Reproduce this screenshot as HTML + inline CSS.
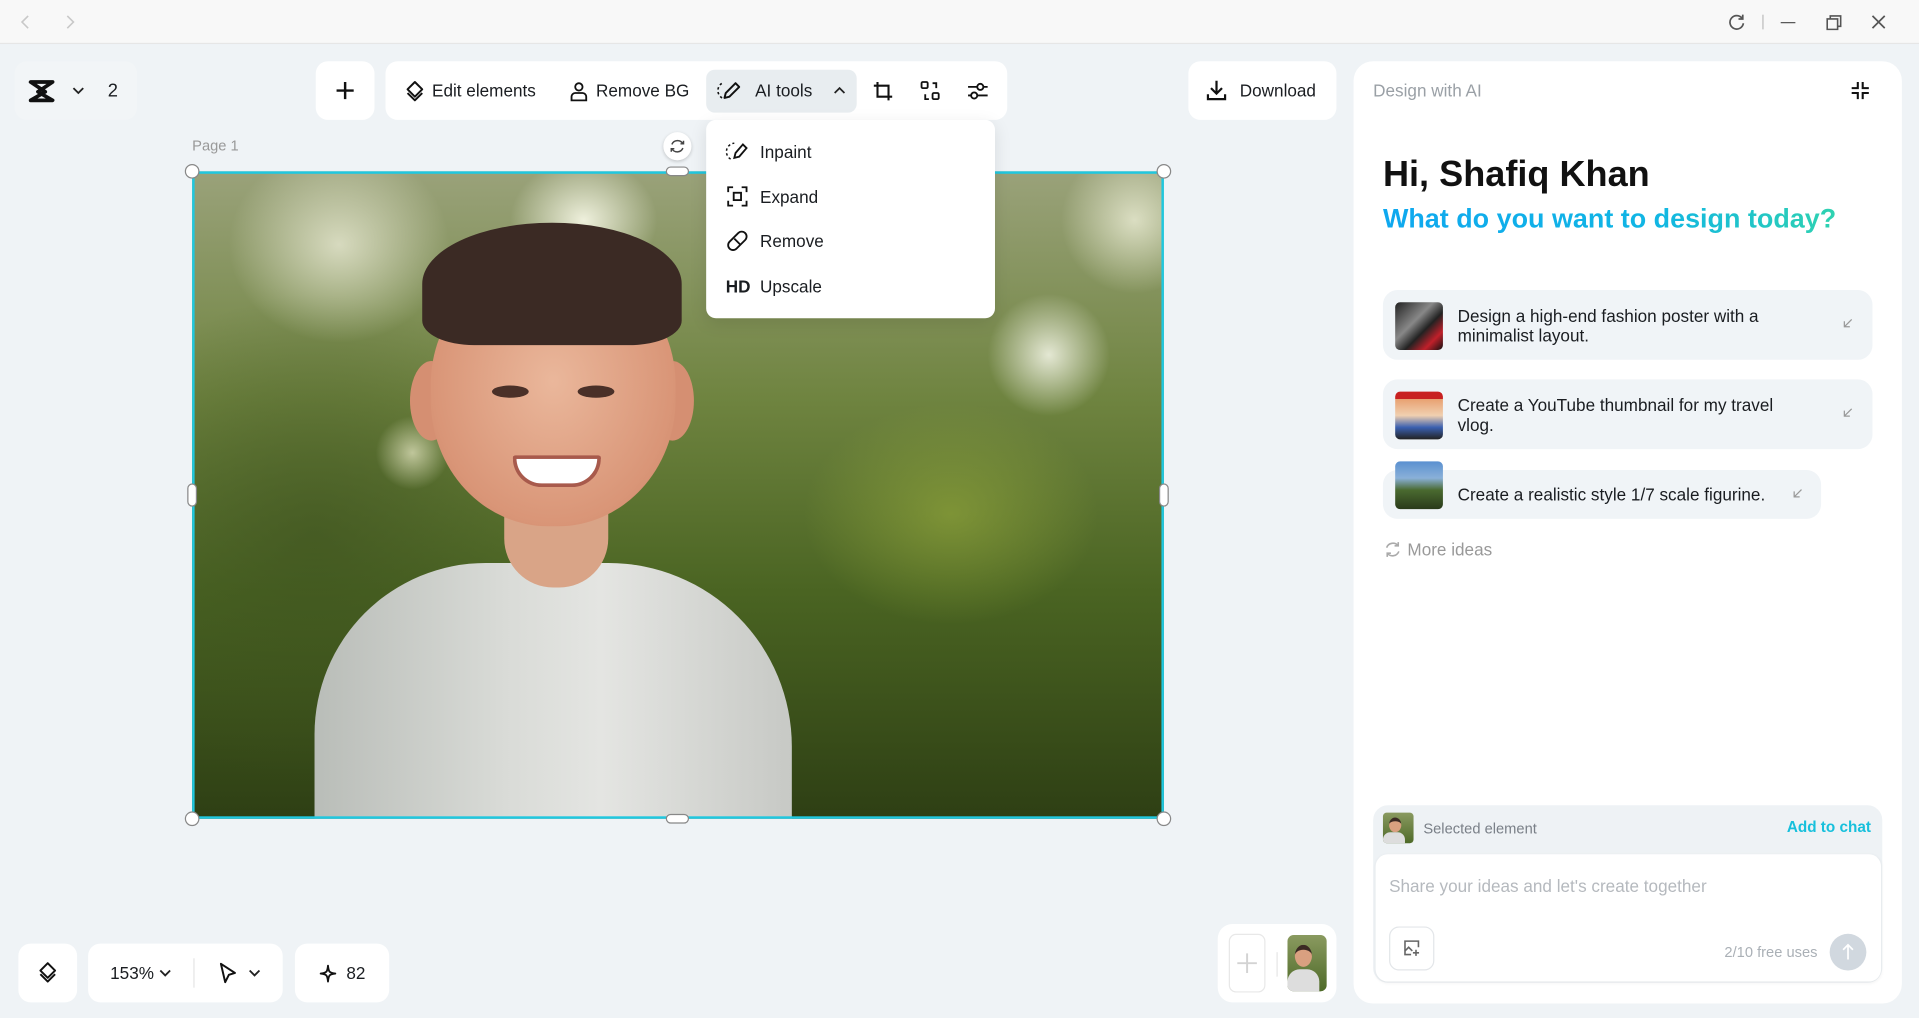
<!DOCTYPE html>
<html><head><meta charset="utf-8"><style>
*{box-sizing:border-box;margin:0;padding:0}
html,body{width:1919px;height:1018px;overflow:hidden;background:#eff3f6;font-family:"Liberation Sans",sans-serif;color:#1a1d21}
#w{position:absolute;left:0;top:0;width:1568px;height:832px;transform:scale(1.22385);transform-origin:0 0;background:#eff3f6}
.a{position:absolute}
.wb{position:absolute;background:#fff;border-radius:10px}
.t{position:absolute;font-size:14px;white-space:nowrap;line-height:1}
svg{position:absolute;overflow:visible}
.card{position:absolute;background:#f0f4f7;border-radius:12px}
.th{position:absolute;border-radius:4px;overflow:hidden}
.h{position:absolute;width:12px;height:12px;border-radius:50%;background:#fff;border:1.3px solid #888}
</style></head><body><div id="w">
<div class="a" style="left:0;top:0;width:1568px;height:36px;background:#f8f8f8;border-bottom:1px solid #e6e6e6"></div>
<svg style="left:16px;top:12px" width="10" height="12"><path d="M7 1L2 6l5 5" fill="none" stroke="#c8c8c8" stroke-width="1.3"/></svg>
<svg style="left:52px;top:12px" width="10" height="12"><path d="M3 1l5 5-5 5" fill="none" stroke="#c8c8c8" stroke-width="1.3"/></svg>
<svg style="left:1412px;top:11px" width="14" height="14"><path d="M11.5 4A5.5 5.5 0 1 0 12.5 8M12 1v3.5H8.5" fill="none" stroke="#555" stroke-width="1.4"/></svg>
<div class="a" style="left:1440px;top:12px;width:1px;height:12px;background:#bbb"></div>
<div class="a" style="left:1455px;top:18px;width:12px;height:1.4px;background:#555"></div>
<svg style="left:1492px;top:12px" width="13" height="13"><path d="M1 3.5h8.5V12H1z M3.5 3.5V1H12v8.5H9.5" fill="none" stroke="#555" stroke-width="1.3"/></svg>
<svg style="left:1529px;top:12px" width="12" height="12"><path d="M1 1l10 10M11 1L1 11" stroke="#555" stroke-width="1.4"/></svg>

<div class="a" style="left:12px;top:50px;width:100px;height:48px;background:#f2f5f7;border-radius:10px"></div>
<svg style="left:23px;top:66px" width="22" height="17"><path d="M2 1h18L8 9l12 7H2l12-7z" fill="none" stroke="#111" stroke-width="3" stroke-linejoin="round"/></svg>
<svg style="left:59px;top:71px" width="10" height="6"><path d="M1 1l4 4 4-4" fill="none" stroke="#222" stroke-width="1.5"/></svg>
<div class="t" style="left:88px;top:67px;font-size:15px">2</div>

<div class="wb" style="left:258px;top:50px;width:48px;height:48px"></div>
<svg style="left:274px;top:66px" width="16" height="16"><path d="M8 1v14M1 8h14" stroke="#111" stroke-width="2"/></svg>

<div class="wb" style="left:315px;top:50px;width:508px;height:48px"></div>
<svg style="left:331px;top:66px" width="16" height="17"><path d="M8 1l6 6-6 6-6-6z M2 10l6 6 6-6" fill="none" stroke="#111" stroke-width="1.6" stroke-linejoin="round"/></svg>
<div class="t" style="left:353px;top:67px">Edit elements</div>
<svg style="left:465px;top:66px" width="16" height="17"><circle cx="8" cy="5" r="3" fill="none" stroke="#111" stroke-width="1.5"/><path d="M2 16v-3a3 3 0 0 1 3-3h6a3 3 0 0 1 3 3v3z" fill="none" stroke="#111" stroke-width="1.5"/></svg>
<div class="t" style="left:487px;top:67px">Remove BG</div>
<div class="a" style="left:577px;top:57px;width:123px;height:35px;background:#e8edf0;border-radius:7px"></div>
<svg style="left:587px;top:66px" width="18" height="17"><path d="M3 14a7 7 0 0 1 0-12" fill="none" stroke="#111" stroke-width="1.3" stroke-dasharray="2 2"/><path d="M14 2l3 3-8 8-4 1 1-4z" fill="none" stroke="#111" stroke-width="1.6" stroke-linejoin="round"/></svg>
<div class="t" style="left:617px;top:67px">AI tools</div>
<svg style="left:681px;top:71px" width="10" height="6"><path d="M1 5l4-4 4 4" fill="none" stroke="#222" stroke-width="1.4"/></svg>
<svg style="left:713px;top:66px" width="17" height="17"><path d="M4 1v12h12M1 4h12v12" fill="none" stroke="#111" stroke-width="1.7"/></svg>
<svg style="left:752px;top:66px" width="17" height="17"><rect x="1" y="1" width="5" height="5" rx="1" fill="none" stroke="#111" stroke-width="1.5"/><rect x="10" y="10" width="5" height="5" rx="1" fill="none" stroke="#111" stroke-width="1.5"/><path d="M10 2h3v4M7 15H4v-4" fill="none" stroke="#111" stroke-width="1.5"/></svg>
<svg style="left:790px;top:66px" width="18" height="17"><path d="M1 5h16M1 12h16" stroke="#111" stroke-width="1.5"/><circle cx="11" cy="5" r="2.5" fill="#fff" stroke="#111" stroke-width="1.5"/><circle cx="6" cy="12" r="2.5" fill="#fff" stroke="#111" stroke-width="1.5"/></svg>

<div class="wb" style="left:971px;top:50px;width:121px;height:48px"></div>
<svg style="left:986px;top:65px" width="16" height="18"><path d="M8 1v10M3.5 7L8 11.5 12.5 7M1 12v4h14v-4" fill="none" stroke="#111" stroke-width="1.8"/></svg>
<div class="t" style="left:1013px;top:67px">Download</div>

<div class="a" style="left:157px;top:140px;width:794px;height:529px;overflow:hidden;background:
radial-gradient(ellipse 60px 50px at 320px 40px,rgba(255,255,240,.85),transparent),
radial-gradient(ellipse 90px 80px at 120px 60px,rgba(240,240,220,.75),transparent),
radial-gradient(ellipse 50px 50px at 700px 150px,rgba(255,255,245,.8),transparent),
radial-gradient(ellipse 40px 40px at 580px 80px,rgba(240,240,200,.7),transparent),
radial-gradient(ellipse 60px 60px at 770px 40px,rgba(250,250,230,.7),transparent),
radial-gradient(ellipse 30px 30px at 180px 230px,rgba(235,235,200,.7),transparent),
radial-gradient(ellipse 120px 90px at 620px 280px,rgba(150,170,60,.6),transparent),
radial-gradient(ellipse 200px 200px at 100px 300px,rgba(60,80,30,.6),transparent),
linear-gradient(180deg,#9aa27a 0%,#6f8440 35%,#4a6422 65%,#2e3f14 100%)">
 <div class="a" style="left:100px;top:320px;width:390px;height:260px;background:linear-gradient(90deg,#b9bdb8,#d9dbd7 40%,#e4e5e2 60%,#c7c9c5);border-radius:140px 150px 0 0"></div>
 <div class="a" style="left:255px;top:260px;width:85px;height:80px;background:#d9a487;border-radius:0 0 40px 40px"></div>
 <div class="a" style="left:178px;top:155px;width:35px;height:65px;background:#d58f72;border-radius:50%"></div>
 <div class="a" style="left:375px;top:155px;width:35px;height:65px;background:#d58f72;border-radius:50%"></div>
 <div class="a" style="left:195px;top:75px;width:200px;height:215px;background:radial-gradient(ellipse at 50% 45%,#eab79b,#d99577 70%,#c47d62);border-radius:46% 46% 48% 48%"></div>
 <div class="a" style="left:188px;top:42px;width:212px;height:100px;background:#3b2a24;border-radius:50% 50% 20% 20%"></div>
 <div class="a" style="left:245px;top:175px;width:30px;height:10px;background:#4a3028;border-radius:50%"></div>
 <div class="a" style="left:315px;top:175px;width:30px;height:10px;background:#4a3028;border-radius:50%"></div>
 <div class="a" style="left:262px;top:232px;width:72px;height:26px;background:#fff;border:3px solid #a85a4c;border-radius:4px 4px 40px 40px"></div>
</div>
<div class="a" style="left:157px;top:140px;width:794px;height:529px;border:2px solid #1fc8e0"></div>
<div class="h" style="left:151px;top:134px"></div><div class="h" style="left:945px;top:134px"></div>
<div class="h" style="left:151px;top:663px"></div><div class="h" style="left:945px;top:663px"></div>
<div class="a" style="left:544px;top:136px;width:19px;height:8px;border-radius:4px;background:#fff;border:1.3px solid #888"></div>
<div class="a" style="left:544px;top:665px;width:19px;height:8px;border-radius:4px;background:#fff;border:1.3px solid #888"></div>
<div class="a" style="left:153px;top:395px;width:8px;height:19px;border-radius:4px;background:#fff;border:1.3px solid #888"></div>
<div class="a" style="left:947px;top:395px;width:8px;height:19px;border-radius:4px;background:#fff;border:1.3px solid #888"></div>
<div class="a" style="left:542px;top:108px;width:23px;height:23px;border-radius:50%;background:#fff;box-shadow:0 1px 3px rgba(0,0,0,.2)"></div>
<svg style="left:547px;top:113px" width="13" height="13"><path d="M11 4.5A5 5 0 0 0 2 5M2 8.5A5 5 0 0 0 11 8M9 4.5h2.5V2M4 8.5H1.5V11" fill="none" stroke="#444" stroke-width="1.2"/></svg>
<div class="t" style="left:157px;top:113px;font-size:12px;color:#999">Page 1</div>

<div class="a" style="left:577px;top:98px;width:236px;height:162px;background:#fff;border-radius:8px;box-shadow:0 4px 14px rgba(0,0,0,.1)"></div>
<svg style="left:594px;top:115px" width="18" height="18"><path d="M3 15a7 7 0 0 1 3-13" fill="none" stroke="#111" stroke-width="1.2" stroke-dasharray="2 2"/><path d="M13 3l3 3-6 7-4 1 1-4z" fill="none" stroke="#111" stroke-width="1.5"/></svg>
<div class="t" style="left:621px;top:117px">Inpaint</div>
<svg style="left:594px;top:152px" width="17" height="17"><path d="M1 5V1h4M12 1h4v4M16 12v4h-4M5 16H1v-4" fill="none" stroke="#111" stroke-width="1.5"/><rect x="5.5" y="5.5" width="6" height="6" fill="none" stroke="#111" stroke-width="1.5"/></svg>
<div class="t" style="left:621px;top:154px">Expand</div>
<svg style="left:594px;top:189px" width="17" height="17"><rect x="4" y="-1" width="8" height="18" rx="4" transform="rotate(45 8.5 8.5)" fill="none" stroke="#111" stroke-width="1.5"/><path d="M6 6l5 5" stroke="#111" stroke-width="1.5"/></svg>
<div class="t" style="left:621px;top:190px">Remove</div>
<div class="t" style="left:593px;top:227px;font-weight:bold;font-size:14px">HD</div>
<div class="t" style="left:621px;top:227px">Upscale</div>

<div class="wb" style="left:15px;top:771px;width:48px;height:48px"></div>
<svg style="left:31px;top:786px" width="16" height="17"><path d="M8 1l6 6-6 6-6-6z M2 10l6 6 6-6" fill="none" stroke="#111" stroke-width="1.6" stroke-linejoin="round"/></svg>
<div class="wb" style="left:72px;top:771px;width:159px;height:48px"></div>
<div class="t" style="left:90px;top:788px">153%</div>
<svg style="left:130px;top:792px" width="10" height="6"><path d="M1 1l4 4 4-4" fill="none" stroke="#222" stroke-width="1.5"/></svg>
<div class="a" style="left:158px;top:783px;width:1px;height:24px;background:#e5e5e5"></div>
<svg style="left:179px;top:786px" width="15" height="18"><path d="M1.5 1.5L13 9l-5 1.5-3 6z" fill="none" stroke="#111" stroke-width="1.6" stroke-linejoin="round"/></svg>
<svg style="left:203px;top:792px" width="10" height="6"><path d="M1 1l4 4 4-4" fill="none" stroke="#222" stroke-width="1.5"/></svg>
<div class="wb" style="left:241px;top:771px;width:77px;height:48px"></div>
<svg style="left:261px;top:788px" width="14" height="15"><path d="M7 1C7.5 6 8 7 13 7.5 8 8 7.5 9 7 14 6.5 9 6 8 1 7.5 6 7 6.5 6 7 1z" fill="none" stroke="#111" stroke-width="1.5" stroke-linejoin="round"/></svg>
<div class="t" style="left:283px;top:788px">82</div>

<div class="wb" style="left:995px;top:755px;width:97px;height:64px;border-radius:12px"></div>
<div class="a" style="left:1004px;top:763px;width:30px;height:48px;border:1px solid #e8e8e8;border-radius:6px"></div>
<svg style="left:1010px;top:778px" width="18" height="18"><path d="M9 1v16M1 9h16" stroke="#d3d3d3" stroke-width="1.6"/></svg>
<div class="a" style="left:1043px;top:778px;width:1px;height:20px;background:#e5e5e5"></div>
<div class="a" style="left:1052px;top:764px;width:32px;height:46px;border-radius:5px;background:linear-gradient(180deg,#8a9a60,#4e6a28);overflow:hidden"><div class="a" style="left:6px;top:8px;width:14px;height:18px;background:#d9a080;border-radius:50%;border-top:4px solid #3b2a24"></div><div class="a" style="left:0;top:28px;width:26px;height:20px;background:#ddd;border-radius:10px 10px 0 0"></div></div>

<div class="a" style="left:1106px;top:50px;width:448px;height:770px;background:#fff;border-radius:16px"></div>
<div class="t" style="left:1122px;top:67px;color:#9aa0a6">Design with AI</div>
<svg style="left:1512px;top:66px" width="16" height="16"><path d="M6 1v5H1M10 1v5h5M6 15v-5H1M10 15v-5h5" fill="none" stroke="#111" stroke-width="1.7"/></svg>
<div class="t" style="left:1130px;top:128px;font-size:29.5px;font-weight:bold;color:#111">Hi, Shafiq Khan</div>
<div class="t" style="left:1130px;top:168px;font-size:22px;font-weight:bold;background:linear-gradient(90deg,#0fa8ef,#11b6e4 60%,#2fd2b0);-webkit-background-clip:text;background-clip:text;color:transparent;padding-bottom:4px">What do you want to design today?</div>

<div class="card" style="left:1130px;top:237px;width:400px;height:57px"></div>
<div class="th" style="left:1140px;top:247px;width:39px;height:39px;background:linear-gradient(135deg,#222,#888 40%,#222 60%,#c0202a 80%,#111)"></div>
<div class="t" style="left:1191px;top:250px;line-height:16px;white-space:normal;width:290px">Design a high-end fashion poster with a minimalist layout.</div>
<svg style="left:1506px;top:260px" width="8" height="8"><path d="M7 1L1 7M1 2.5V7h4.5" fill="none" stroke="#999" stroke-width="1"/></svg>

<div class="card" style="left:1130px;top:310px;width:400px;height:57px"></div>
<div class="th" style="left:1140px;top:320px;width:39px;height:39px;background:linear-gradient(180deg,#c82020 0 15%,#e8a070 15%,#f0d0b0 50%,#3a60b0 75%,#222)"></div>
<div class="t" style="left:1191px;top:323px;line-height:16px;white-space:normal;width:285px">Create a YouTube thumbnail for my travel vlog.</div>
<svg style="left:1506px;top:333px" width="8" height="8"><path d="M7 1L1 7M1 2.5V7h4.5" fill="none" stroke="#999" stroke-width="1"/></svg>

<div class="card" style="left:1130px;top:384px;width:358px;height:40px"></div>
<div class="th" style="left:1140px;top:377px;width:39px;height:39px;background:linear-gradient(180deg,#5a90d0,#8ab0d8 35%,#4a6a30 60%,#2a3a1a)"></div>
<div class="t" style="left:1191px;top:397px">Create a realistic style 1/7 scale figurine.</div>
<svg style="left:1465px;top:399px" width="8" height="8"><path d="M7 1L1 7M1 2.5V7h4.5" fill="none" stroke="#999" stroke-width="1"/></svg>

<svg style="left:1131px;top:442px" width="14" height="14"><path d="M11.5 4A5.5 5.5 0 0 0 2 5.5M2.5 10A5.5 5.5 0 0 0 12 8.5M11.5 1v3H8.5M2.5 13v-3h3" fill="none" stroke="#aaa" stroke-width="1.3"/></svg>
<div class="t" style="left:1150px;top:442px;color:#999">More ideas</div>

<div class="a" style="left:1122px;top:658px;width:416px;height:145px;background:#eef2f5;border-radius:12px"></div>
<div class="a" style="left:1130px;top:664px;width:25px;height:25px;border-radius:3px;background:linear-gradient(180deg,#8a9a60,#4e6a28);overflow:hidden"><div class="a" style="left:5px;top:4px;width:10px;height:12px;background:#d9a080;border-radius:50%;border-top:3px solid #3b2a24"></div><div class="a" style="left:0;top:16px;width:18px;height:10px;background:#ddd;border-radius:6px 6px 0 0"></div></div>
<div class="t" style="left:1163px;top:671px;font-size:12px;color:#7a8088">Selected element</div>
<div class="t" style="left:1460px;top:670px;font-size:12.5px;font-weight:bold;color:#17c0dc">Add to chat</div>
<div class="a" style="left:1124px;top:698px;width:413px;height:104px;background:#fff;border-radius:10px;box-shadow:0 1px 3px rgba(0,0,0,.06)"></div>
<div class="t" style="left:1135px;top:717px;color:#b5b9be">Share your ideas and let's create together</div>
<div class="a" style="left:1135px;top:757px;width:37px;height:36px;border:1px solid #e3e6e9;border-radius:8px"></div>
<svg style="left:1147px;top:768px" width="14" height="14"><path d="M12 6V1H1v11h5" fill="none" stroke="#666" stroke-width="1.3"/><path d="M1 9l3-3 3 3M10 8v5M7.5 10.5h5" fill="none" stroke="#666" stroke-width="1.3"/></svg>
<div class="t" style="left:1409px;top:772px;font-size:12px;color:#aab0b6">2/10 free uses</div>
<div class="a" style="left:1495px;top:763px;width:30px;height:30px;border-radius:50%;background:#d1d8df"></div>
<svg style="left:1505px;top:771px" width="10" height="14"><path d="M5 13V1M1 5l4-4 4 4" fill="none" stroke="#fff" stroke-width="1.4"/></svg>
</div></body></html>
